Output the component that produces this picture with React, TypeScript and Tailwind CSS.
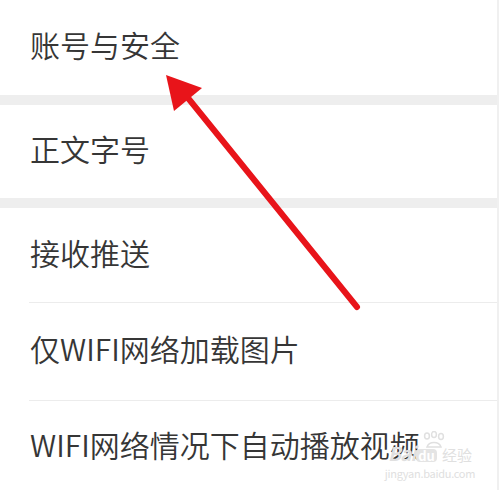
const FONT = "font-['Noto_Sans_CJK_SC','Noto_Sans',sans-serif]"

type Row = { label: string; h: string; divider?: 'band' | 'line' }

const ROWS: Row[] = [
  { label: '账号与安全', h: 'h-[95px]', divider: 'band' },
  { label: '正文字号', h: 'h-[93px]', divider: 'band' },
  { label: '接收推送', h: 'h-[94px]', divider: 'line' },
  { label: '仅WIFI网络加载图片', h: 'h-[97px]', divider: 'line' },
  { label: 'WIFI网络情况下自动播放视频', h: 'h-[92px]' },
]

function Arrow() {
  return (
    <svg className="absolute left-0 top-0 pointer-events-none" width="502" height="490" viewBox="0 0 502 490">
      <line x1="357" y1="307" x2="188" y2="98" stroke="#e8141a" strokeWidth="6" strokeLinecap="round" />
      <polygon points="166,75 202,88 174,111" fill="#e8141a" />
    </svg>
  )
}

// faint baidu jingyan watermark, lies over the last row
function Watermark() {
  return (
    <div className="absolute left-[384px] top-[432px] w-[92px] flex flex-col items-center leading-none text-[#e0e0e0] pointer-events-none">
      <div className="relative flex items-end h-[30px]">
        <svg className="absolute left-[34px] -top-[1px]" width="24" height="18" viewBox="0 0 24 18">
          <g fill="none" stroke="#e0e0e0" strokeWidth="1.5">
            <ellipse cx="5" cy="5" rx="2.4" ry="3" />
            <ellipse cx="12" cy="3.5" rx="2.4" ry="3" />
            <ellipse cx="19" cy="5.5" rx="2.4" ry="3" />
            <path d="M5 16 C7 10 17 10 19 16 Z" />
          </g>
        </svg>
        <span className="text-[19px] font-bold italic tracking-tighter">Bai</span>
        <span className="ml-px rounded-sm bg-[#e4e4e4] px-0.5 text-[13px] font-bold text-white">du</span>
        <span className="ml-[5px] text-[15px]">经验</span>
      </div>
      <span className="mt-[6px] text-[11px] tracking-tight">jingyan.baidu.com</span>
    </div>
  )
}

export default function App() {
  return (
    <div className={`relative w-[502px] h-[490px] overflow-hidden bg-white ${FONT}`}>
      <div className="flex flex-col mr-[3px] border-r-2 border-[#f0f0f0]">
        {ROWS.map((row) => (
          <div key={row.label}>
            <div className={`flex items-center pl-[30px] pb-[7px] ${row.h}`}>
              <span className="text-[30px] leading-none font-[350] text-[#363636]">{row.label}</span>
            </div>
            {row.divider === 'band' && <div className="h-[10px] bg-[#eeeeee]" />}
            {row.divider === 'line' && <div className="ml-[29px] h-px bg-[#ececec]" />}
          </div>
        ))}
      </div>
      <Watermark />
      <Arrow />
    </div>
  )
}
